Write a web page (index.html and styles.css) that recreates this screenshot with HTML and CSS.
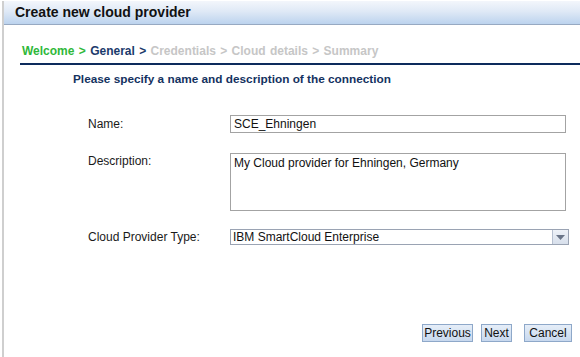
FILE: index.html
```html
<!DOCTYPE html>
<html lang="en">
<head>
    <meta charset="UTF-8">
    <title>Create new cloud provider</title>
    <link rel="stylesheet" href="styles.css">
</head>
<body>
    <div class="dialog">
        <div class="title-bar">Create new cloud provider</div>

        <div class="steps">
            <span class="done">Welcome &gt;</span>
            <span class="current">General &gt;</span>
            <span class="todo">Credentials &gt;</span>
            <span class="todo">Cloud details &gt;</span>
            <span class="todo">Summary</span>
        </div>

        <h2 class="intro">Please specify a name and description of the connection</h2>

        <div class="form">
            <div class="row">
                <label>Name:</label>
                <div class="field input">SCE_Ehningen</div>
            </div>
            <div class="row top">
                <label>Description:</label>
                <div class="field textarea">My Cloud provider for Ehningen, Germany</div>
            </div>
            <div class="row">
                <label>Cloud Provider Type:</label>
                <div class="field select">
                    <span class="value">IBM SmartCloud Enterprise</span>
                    <span class="arrow">
                        <svg width="9" height="5" viewBox="0 0 9 5"><path d="M0 0 L9 0 L4.5 5 Z" fill="#6a7588"/></svg>
                    </span>
                </div>
            </div>
        </div>

        <div class="buttons">
            <button class="btn prev">Previous</button>
            <button class="btn next">Next</button>
            <button class="btn cancel">Cancel</button>
        </div>
    </div>
</body>
</html>
```

FILE: styles.css
```css
html, body {
    margin: 0;
    background: white;
}

body {
    font-family: "Liberation Sans", Arial, sans-serif;
    font-size: 12px;
    color: #1a1a1a;
    padding: 1px 0 0 2px;
}

.dialog {
    border-left: 2px solid #cfcfcf;
    height: 356px;
    box-sizing: border-box;
}

.title-bar {
    height: 23px;
    line-height: 23px;
    padding-left: 11px;
    font-size: 14px;
    font-weight: bold;
    color: #111;
    background: linear-gradient(#f3f6fb, #dfe9f6 45%, #bcd3ee);
    border-bottom: 1px solid #97a9c2;
}

.steps {
    margin: 19px 0 0 16px;
    padding: 0 0 5px 2px;
    font-weight: bold;
    font-size: 12px;
    border-bottom: 2px solid #0d2b5c;
    word-spacing: 1px;
}

.done {
    color: #2fb83a;
}

.current {
    color: #1b3a6b;
}

.todo {
    color: #c6c6c6;
}

.intro {
    margin: 7px 0 0 69px;
    font-size: 11.8px;
    font-weight: bold;
    color: #14325f;
}

.form {
    margin: 29px 0 0 84px;
    display: flex;
    flex-direction: column;
    gap: 20px;
}

.row {
    display: flex;
    align-items: center;
}

.row.top {
    align-items: flex-start;
}

.row.top label {
    padding-top: 1px;
}

.row:nth-child(3) {
    margin-top: -2px;
}

.row label {
    width: 142px;
}

.field {
    box-sizing: border-box;
    width: 336px;
    border: 1px solid #a3a3a3;
    background: white;
    color: #111;
    padding-left: 3px;
}

.input {
    height: 18px;
    line-height: 16px;
}

.textarea {
    height: 58px;
    padding-top: 2px;
}

.select {
    width: 339px;
    height: 16px;
    line-height: 14px;
    display: flex;
    border-color: #9aa3b3;
    padding-left: 2px;
}

.select .value {
    flex: 1;
}

.select .arrow {
    width: 15px;
    border-left: 1px solid #b6c0d0;
    background: linear-gradient(#eef2f8, #d7dfeb);
    display: flex;
    align-items: center;
    justify-content: center;
}

.buttons {
    display: flex;
    justify-content: flex-end;
    gap: 8px;
    margin: 79px 8px 0 0;
}

.btn {
    height: 18px;
    padding: 0;
    font-family: "Liberation Sans", Arial, sans-serif;
    font-size: 12px;
    color: #111;
    border: 1px solid #8ea8c9;
    background: linear-gradient(#e6eef8, #c7d8ee);
    border-radius: 0;
    cursor: pointer;
}

.prev {
    width: 51px;
}

.next {
    width: 31px;
}

.cancel {
    width: 48px;
    margin-left: 4px;
}
```
